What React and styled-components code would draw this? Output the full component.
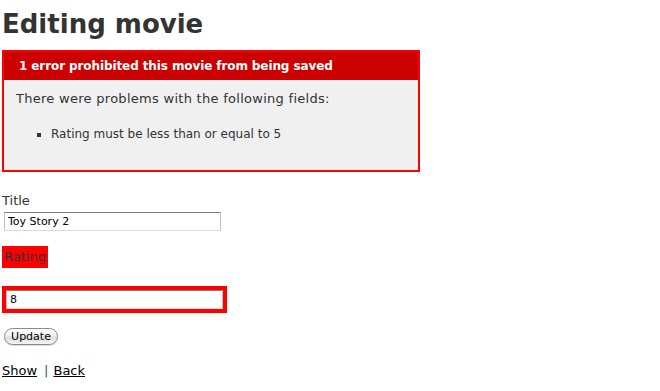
import React from "react";
import styled, { createGlobalStyle } from "styled-components";

const GlobalStyle = createGlobalStyle`
  html, body {
    margin: 0;
    padding: 0;
    background: #fff;
  }
  body {
    font-family: "DejaVu Sans", Verdana, sans-serif;
    font-size: 13px;
    line-height: 18px;
    color: #333;
  }
`;

const Page = styled.div`
  padding: 0 2px;
`;

const Heading = styled.h1`
  margin: 9px 0 11px;
  font-size: 26px;
  line-height: 30px;
  font-weight: bold;
  color: #333;
`;

const ErrorBox = styled.div`
  width: 400px;
  border: 2px solid #f00;
  padding: 7px 7px 12px;
  margin-bottom: 20px;
  background: #f0f0f0;
`;

const ErrorTitle = styled.h2`
  margin: -7px -7px 0;
  padding: 5px 5px 5px 15px;
  font-size: 12px;
  line-height: 18px;
  font-weight: bold;
  letter-spacing: -0.1px;
  background: #c00;
  color: #fff;
`;

const ErrorIntro = styled.p`
  margin: 5px 0 0;
  padding: 5px;
  letter-spacing: 0.28px;
  color: #333;
`;

const ErrorList = styled.ul`
  margin: 12px 0 15px;
  padding-left: 40px;
  li {
    font-size: 12px;
    list-style: square;
  }
`;

const Field = styled.div`
  display: flow-root;
  margin: 13px 0;
`;

const Label = styled.label`
  display: block;
  color: #333;
`;

const FieldWithErrors = styled.div`
  display: table;
  padding: 2px;
  background: #f00;
  margin-top: ${(p) => p.$gap || 0}px;
`;

const TextInput = styled.input`
  display: block;
  box-sizing: border-box;
  width: 217px;
  height: 19px;
  margin: 2px;
  padding: 0 3px;
  border: 1px solid #c3c3c3;
  border-top-color: #7f7f7f;
  border-bottom-color: #dadada;
  background: #fff;
  font-family: "DejaVu Sans", sans-serif;
  font-size: 11px;
  color: #000;
  outline: none;
`;

const Button = styled.button`
  display: block;
  box-sizing: border-box;
  width: 54px;
  height: 17px;
  margin: 2px;
  padding: 0;
  border: 1px solid #8a8a8a;
  border-radius: 9px;
  background: linear-gradient(#ffffff, #f1f1f1 45%, #dedede 55%, #f4f4f4);
  box-shadow: 0 1px 1px rgba(0, 0, 0, 0.15);
  font-family: "DejaVu Sans", sans-serif;
  font-size: 11px;
  line-height: 15px;
  color: #000;
`;

const Links = styled.div`
  padding-top: 2px;
  color: #333;
`;

const Link = styled.a`
  color: #000;
  text-decoration: underline;
`;

const Separator = styled.span`
  margin: 0 5px 0 7px;
  color: #456;
`;

export default function App() {
  return (
    <>
      <GlobalStyle />
      <Page>
        <Heading>Editing movie</Heading>
        <ErrorBox>
          <ErrorTitle>1 error prohibited this movie from being saved</ErrorTitle>
          <ErrorIntro>There were problems with the following fields:</ErrorIntro>
          <ErrorList>
            <li>Rating must be less than or equal to 5</li>
          </ErrorList>
        </ErrorBox>
        <Field>
          <Label htmlFor="movie_title">Title</Label>
          <TextInput id="movie_title" defaultValue="Toy Story 2" />
        </Field>
        <Field>
          <FieldWithErrors>
            <Label htmlFor="movie_rating">Rating</Label>
          </FieldWithErrors>
          <FieldWithErrors $gap={18}>
            <TextInput id="movie_rating" defaultValue="8" />
          </FieldWithErrors>
        </Field>
        <Field>
          <Button type="button">Update</Button>
        </Field>
        <Links>
          <Link href="#">Show</Link>
          <Separator>|</Separator>
          <Link href="#">Back</Link>
        </Links>
      </Page>
    </>
  );
}
